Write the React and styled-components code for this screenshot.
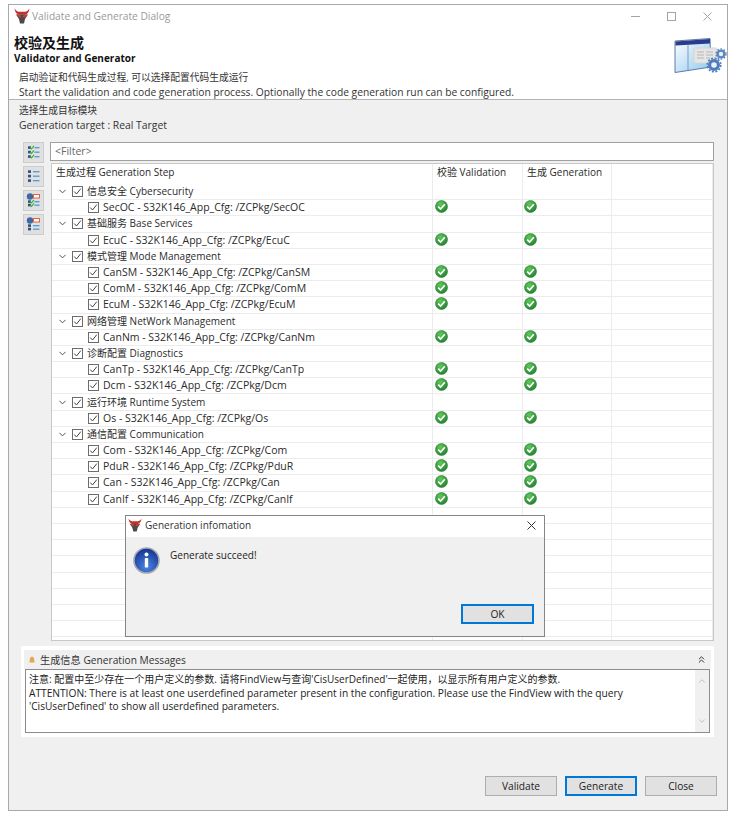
import styled, { createGlobalStyle } from "styled-components";
import { ChevronDown, ChevronUp, ChevronsUp } from "lucide-react";

const GlobalStyle = createGlobalStyle`
  html, body {
    margin: 0;
    background: #fff;
  }
  * { box-sizing: border-box; }
  body {
    font-family: "Open Sans", "Noto Sans CJK SC", sans-serif;
    font-size: 10.5px;
    color: #222;
  }
`;

const Window = styled.div`
  position: relative;
  display: flex;
  flex-direction: column;
  width: 720px;
  height: 807px;
  margin: 4px 0 0 8px;
  border: 1px solid #a9a9a9;
  background: #fff;
`;
const TitleBar = styled.div`
  display: flex;
  align-items: center;
  height: 24px;
  padding: 0 15px 2px 5px;
  gap: 2px;
`;
const TitleText = styled.span`
  flex: 1;
  color: #9a9a9a;
  font-size: 10.2px;
`;
const WindowControls = styled.div`
  display: flex;
  gap: 27px;
  color: #a4a4a4;
`;
const Header = styled.div`
  display: flex;
  justify-content: space-between;
  height: 71px;
  padding: 5px 0 0 5px;
  border-bottom: 1px solid #b4b4b4;
`;
const HeaderTitle = styled.div`
  font-size: 14px;
  font-weight: 700;
  line-height: 18px;
  color: #111;
`;
const HeaderSubtitle = styled.div`
  font-size: 10px;
  font-weight: 700;
  line-height: 12px;
  color: #111;
`;
const HeaderIntro = styled.div`
  margin-top: 7px;
  padding-left: 5px;
`;
const TextLine = styled.div`
  font-size: ${(p) => p.$size || 10.25}px;
  line-height: 14px;
  white-space: nowrap;
  color: #333;
`;
const Banner = styled.div`
  padding-top: 4px;
  line-height: 0;
`;
const Body = styled.div`
  display: flex;
  flex: 1;
  flex-direction: column;
  min-height: 0;
  background: #f0f0f0;
`;
const TargetInfo = styled.div`
  height: 42px;
  padding: 4px 0 0 10px;
`;
const Workspace = styled.div`
  display: flex;
  gap: 6px;
  height: 499px;
  padding: 0 13px 0 14px;
`;
const SideBar = styled.div`
  display: flex;
  flex-direction: column;
  gap: 3px;
  width: 21px;
`;
const ToolButton = styled.div`
  display: flex;
  align-items: center;
  justify-content: center;
  width: 21px;
  height: 21px;
  background: #e0e0e0;
  border: 1px solid #cdcdcd;
`;
const Main = styled.div`
  display: flex;
  flex: 1;
  flex-direction: column;
  gap: 2px;
  min-width: 0;
`;
const FilterBox = styled.div`
  height: 19px;
  padding-left: 4px;
  line-height: 17px;
  background: #fff;
  border: 1px solid #a0a0a0;
  color: #666;
`;
const Table = styled.div`
  flex: 1;
  min-height: 0;
  margin-left: 1px;
  overflow: hidden;
  background: #fff;
  border: 1px solid #c8c8c8;
`;
const Row = styled.div`
  display: grid;
  grid-template-columns: 381px 90px 89px 1fr;
  height: ${(p) => (p.$head ? "20px" : "16.2px")};
  border-bottom: ${(p) => (p.$head ? "0" : "1px solid #ececec")};
  line-height: 15px;
  color: #2b2b2b;
`;
const Cell = styled.div`
  display: flex;
  align-items: center;
  gap: 4px;
  padding-left: ${(p) => p.$indent ?? 4}px;
  border-right: 1px solid #ececec;
  white-space: nowrap;
`;
const HeadCell = styled(Cell)`
  padding-bottom: 3px;
  font-size: 10px;
`;
const StatusCell = styled(Cell)`
  padding-bottom: 2px;
`;
const GroupTitle = styled.span`
  font-size: 10px;
`;
const CheckBox = styled.span`
  display: flex;
  align-items: center;
  justify-content: center;
  flex: none;
  width: 11px;
  height: 11px;
  background: #fff;
  border: 1px solid #6c6c6c;
`;
const MessagePanel = styled.div`
  height: 91px;
  margin: 5px 13px 0 12px;
  padding: 4px 3px;
  background: #fff;
`;
const MessageHead = styled.div`
  display: flex;
  align-items: center;
  height: 19px;
  padding: 0 4px 1px 5px;
  gap: 5px;
  background: #f0f0f0;
  font-size: 10.2px;
  color: #333;
  & > span { flex: 1; }
`;
const MessageBox = styled.div`
  position: relative;
  height: 64px;
  margin: 0 1px;
  padding: 3px 18px 0 3px;
  background: #fff;
  border: 1px solid #8c8c8c;
`;
const MessageLine = styled.div`
  font-size: ${(p) => p.$size || 10.2}px;
  line-height: 13.5px;
  white-space: nowrap;
  color: #222;
`;
const ScrollBar = styled.div`
  position: absolute;
  top: 0;
  right: 0;
  bottom: 0;
  display: flex;
  flex-direction: column;
  justify-content: space-between;
  align-items: center;
  width: 14px;
  padding: 6px 0;
  background: #f0f0f0;
  color: #b8b8b8;
`;
const Footer = styled.div`
  display: flex;
  justify-content: flex-end;
  gap: 8px;
  margin-top: 39px;
  padding-right: 10px;
`;
const Button = styled.div`
  display: flex;
  align-items: center;
  justify-content: center;
  width: ${(p) => p.$width || 72}px;
  height: 20px;
  background: #e1e1e1;
  border: ${(p) => (p.$primary ? "2px solid #0078d7" : "1px solid #adadad")};
  font-size: 10.2px;
  color: #222;
`;
const Modal = styled.div`
  position: absolute;
  left: 116px;
  top: 510px;
  display: flex;
  flex-direction: column;
  width: 420px;
  height: 122px;
  background: #f0f0f0;
  border: 1px solid #858585;
`;
const ModalTitle = styled.div`
  display: flex;
  align-items: center;
  height: 21px;
  padding: 0 8px 3px 2px;
  gap: 3px;
  background: #fff;
  font-size: 10px;
  color: #333;
  & > span { flex: 1; }
`;
const ModalBody = styled.div`
  display: flex;
  flex: 1;
  gap: 10px;
  padding: 10px 0 0 7px;
  font-size: 10px;
  line-height: 16px;
  color: #222;
`;
const ModalFooter = styled.div`
  display: flex;
  justify-content: flex-end;
  padding: 0 10px 12px 0;
`;

function BullLogo({ size = 16 }) {
  return (
    <svg width={size} height={size} viewBox="0 0 16 16">
      <path d="M0.5 0.5 C0.8 4 2.5 6 5 6.8 L11 6.8 C13.5 6 15.2 4 15.5 0.5 C14.3 2.6 12.8 3.6 11 3.8 L5 3.8 C3.2 3.6 1.7 2.6 0.5 0.5Z" fill="#c8302c" />
      <path d="M2 6.5 L14 6.5 L11 11 L10 15.5 L6 15.5 L5 11Z" fill="#4a4a4a" />
      <path d="M2.5 6.5 L6.5 7 L7.5 9.5 L5 9.2Z M13.5 6.5 L9.5 7 L8.5 9.5 L11 9.2Z" fill="#d23a33" />
    </svg>
  );
}

function BannerIcon() {
  return (
    <svg width="53" height="36" viewBox="0 0 53 36">
      <defs>
        <linearGradient id="pane" x1="0" y1="0" x2="1" y2="1">
          <stop offset="0" stopColor="#ffffff" />
          <stop offset="1" stopColor="#8fc8ee" />
        </linearGradient>
      </defs>
      <path d="M1 3 L36 0.5 L37 29 L1 34.5Z" fill="url(#pane)" stroke="#5b7ca8" />
      <path d="M1.5 3.5 L36 1 L36 5.5 L1.5 7.5Z" fill="#2a3a8c" />
      <path d="M14 7 L14 32" stroke="#7b9cc4" />
      <rect x="20" y="10" width="23" height="15" rx="1" fill="#e6e6e6" stroke="#d4d4d4" />
      <path d="M23 14h7M32 14h7M23 17h7M32 17h7M23 20h7M32 20h4" stroke="#b5b5b5" />
      <circle cx="47" cy="16" r="3.4" fill="#e8eef6" stroke="#5c86c0" strokeWidth="2.4" />
      <circle cx="47" cy="16" r="5" fill="none" stroke="#5c86c0" strokeWidth="1.4" strokeDasharray="1.6 1.6" />
      <circle cx="40" cy="27" r="4.4" fill="#eef2f8" stroke="#4f7cbc" strokeWidth="3.2" />
      <circle cx="40" cy="27" r="6.8" fill="none" stroke="#4f7cbc" strokeWidth="1.6" strokeDasharray="2 1.6" />
    </svg>
  );
}

// kind: "checks" | "plain" | "nodeChecks" | "node"
function ToolIcon({ kind }) {
  const hasNode = kind === "nodeChecks" || kind === "node";
  const hasChecks = kind === "checks" || kind === "nodeChecks";
  const rows = hasNode ? [8.5, 12] : [2.5, 7, 11.5];
  return (
    <svg width="15" height="15" viewBox="0 0 15 15">
      {hasNode && <circle cx="4" cy="3.5" r="3.2" fill="#3f68a8" />}
      {hasNode && <rect x="7.5" y="1.5" width="6" height="3.5" fill="#fff" stroke="#e8603c" />}
      {rows.map((y) => (
        <g key={y}>
          <rect x="2" y={y - 1.2} width="3" height="2.6" fill="#34507e" />
          {hasChecks && <path d={`M4 ${y} L5.5 ${y + 1.4} L8 ${y - 1.6}`} fill="none" stroke="#3fae3f" strokeWidth="1.2" />}
          <path d={`M${hasChecks ? 8.5 : 7} ${y + 0.2} H13.5`} stroke="#4a9ad8" strokeWidth="1.3" />
        </g>
      ))}
    </svg>
  );
}

function Tick() {
  return (
    <svg width="9" height="9" viewBox="0 0 9 9">
      <path d="M1.2 4.5 L3.5 7 L7.8 1.6" fill="none" stroke="#444" strokeWidth="1" />
    </svg>
  );
}

function OkIcon() {
  return (
    <svg width="13" height="13" viewBox="0 0 13 13">
      <defs>
        <radialGradient id="ok" cx="0.4" cy="0.3" r="0.8">
          <stop offset="0" stopColor="#62c75a" />
          <stop offset="1" stopColor="#1a7d2a" />
        </radialGradient>
      </defs>
      <circle cx="6.5" cy="6.5" r="6" fill="url(#ok)" stroke="#2a7a34" strokeWidth="0.6" />
      <path d="M3.2 6.6 L5.6 9 L9.8 4.2" fill="none" stroke="#fff" strokeWidth="1.7" />
    </svg>
  );
}

function InfoIcon() {
  return (
    <svg width="27" height="27" viewBox="0 0 27 27">
      <defs>
        <radialGradient id="info" cx="0.5" cy="0.75" r="0.75">
          <stop offset="0" stopColor="#4a86e0" />
          <stop offset="1" stopColor="#12308f" />
        </radialGradient>
      </defs>
      <circle cx="13.5" cy="13.5" r="12.5" fill="url(#info)" stroke="#a4a8b0" strokeWidth="1.6" />
      <circle cx="13.5" cy="7.5" r="2" fill="#fff" />
      <rect x="11.8" y="11" width="3.4" height="9.5" rx="0.8" fill="#fff" />
    </svg>
  );
}

function LightIcon() {
  return (
    <svg width="6" height="7" viewBox="0 0 6 7">
      <path d="M3 0.5 C4.5 0.5 5.5 2.5 5.5 6.5 L0.5 6.5 C0.5 2.5 1.5 0.5 3 0.5Z" fill="#e0a850" />
    </svg>
  );
}

function CloseGlyph({ size = 9 }) {
  return (
    <svg width={size} height={size} viewBox="0 0 9 9">
      <path d="M0.5 0.5 L8.5 8.5 M8.5 0.5 L0.5 8.5" fill="none" stroke="currentColor" strokeWidth="1" />
    </svg>
  );
}

function MaxGlyph() {
  return (
    <svg width="9" height="9" viewBox="0 0 9 9">
      <rect x="0.5" y="0.5" width="8" height="8" fill="none" stroke="currentColor" />
    </svg>
  );
}

function MinGlyph() {
  return (
    <svg width="9" height="9" viewBox="0 0 9 9">
      <path d="M0 4.5 H9" stroke="currentColor" />
    </svg>
  );
}

const mod = (name) => `${name} - S32K146_App_Cfg: /ZCPkg/${name}`;
const groups = [
  ["信息安全 Cybersecurity", ["SecOC"]],
  ["基础服务 Base Services", ["EcuC"]],
  ["模式管理 Mode Management", ["CanSM", "ComM", "EcuM"]],
  ["网络管理 NetWork Management", ["CanNm"]],
  ["诊断配置 Diagnostics", ["CanTp", "Dcm"]],
  ["运行环境 Runtime System", ["Os"]],
  ["通信配置 Communication", ["Com", "PduR", "Can", "CanIf"]],
];

function GroupRows({ title, items }) {
  return (
    <>
      <Row>
        <Cell $indent={5}>
          <ChevronDown size={11} color="#444" strokeWidth={2} />
          <CheckBox><Tick /></CheckBox>
          <GroupTitle>{title}</GroupTitle>
        </Cell>
        <Cell />
        <Cell />
        <Cell />
      </Row>
      {items.map((name) => (
        <Row key={name}>
          <Cell $indent={36}>
            <CheckBox><Tick /></CheckBox>
            <span>{mod(name)}</span>
          </Cell>
          <StatusCell $indent={2}><OkIcon /></StatusCell>
          <StatusCell $indent={1}><OkIcon /></StatusCell>
          <Cell />
        </Row>
      ))}
    </>
  );
}

export default function App() {
  return (
    <>
      <GlobalStyle />
      <Window>
        <TitleBar>
          <BullLogo />
          <TitleText>Validate and Generate Dialog</TitleText>
          <WindowControls>
            <MinGlyph />
            <MaxGlyph />
            <CloseGlyph />
          </WindowControls>
        </TitleBar>
        <Header>
          <div>
            <HeaderTitle>校验及生成</HeaderTitle>
            <HeaderSubtitle>Validator and Generator</HeaderSubtitle>
            <HeaderIntro>
              <TextLine $size={9.75}>启动验证和代码生成过程, 可以选择配置代码生成运行</TextLine>
              <TextLine>Start the validation and code generation process. Optionally the code generation run can be configured.</TextLine>
            </HeaderIntro>
          </div>
          <Banner><BannerIcon /></Banner>
        </Header>
        <Body>
          <TargetInfo>
            <TextLine $size={9.75}>选择生成目标模块</TextLine>
            <TextLine $size={10.35}>Generation target : Real Target</TextLine>
          </TargetInfo>
          <Workspace>
            <SideBar>
              <ToolButton><ToolIcon kind="checks" /></ToolButton>
              <ToolButton><ToolIcon kind="plain" /></ToolButton>
              <ToolButton><ToolIcon kind="nodeChecks" /></ToolButton>
              <ToolButton><ToolIcon kind="node" /></ToolButton>
            </SideBar>
            <Main>
              <FilterBox>&lt;Filter&gt;</FilterBox>
              <Table>
                <Row $head>
                  <HeadCell>生成过程 Generation Step</HeadCell>
                  <HeadCell>校验 Validation</HeadCell>
                  <HeadCell>生成 Generation</HeadCell>
                  <HeadCell />
                </Row>
                {groups.map(([title, items]) => (
                  <GroupRows key={title} title={title} items={items} />
                ))}
                {Array.from({ length: 9 }, (_, i) => (
                  <Row key={i}>
                    <Cell />
                    <Cell />
                    <Cell />
                    <Cell />
                  </Row>
                ))}
              </Table>
            </Main>
          </Workspace>
          <MessagePanel>
            <MessageHead>
              <LightIcon />
              <span>生成信息 Generation Messages</span>
              <ChevronsUp size={11} color="#222" strokeWidth={2} />
            </MessageHead>
            <MessageBox>
              <MessageLine $size={10}>注意: 配置中至少存在一个用户定义的参数. 请将FindView与查询'CisUserDefined'一起使用，以显示所有用户定义的参数.</MessageLine>
              <MessageLine>ATTENTION: There is at least one userdefined parameter present in the configuration. Please use the FindView with the query</MessageLine>
              <MessageLine $size={10.13}>'CisUserDefined' to show all userdefined parameters.</MessageLine>
              <ScrollBar>
                <ChevronUp size={10} />
                <ChevronDown size={10} />
              </ScrollBar>
            </MessageBox>
          </MessagePanel>
          <Footer>
            <Button>Validate</Button>
            <Button $primary>Generate</Button>
            <Button>Close</Button>
          </Footer>
        </Body>
        <Modal>
          <ModalTitle>
            <BullLogo size={14} />
            <span>Generation infomation</span>
            <CloseGlyph />
          </ModalTitle>
          <ModalBody>
            <InfoIcon />
            <div>Generate succeed!</div>
          </ModalBody>
          <ModalFooter>
            <Button $primary $width={73}>OK</Button>
          </ModalFooter>
        </Modal>
      </Window>
    </>
  );
}
